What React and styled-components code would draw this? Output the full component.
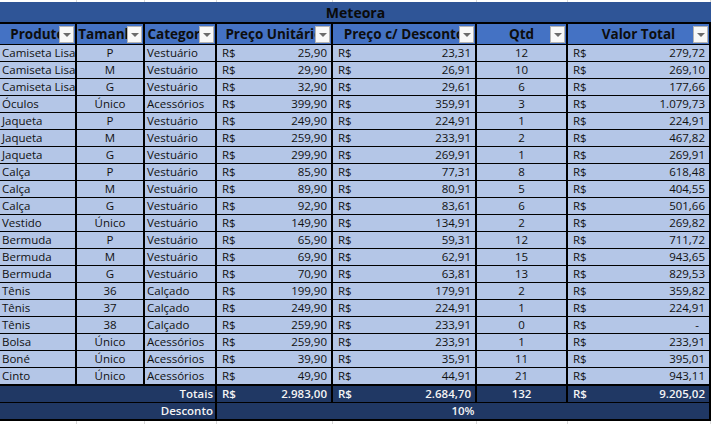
import React from 'react';
import styled, { createGlobalStyle } from 'styled-components';

const COLS = '77px 68px 72px 116px 144px 91px 143px';

const rows = [
  ['Camiseta Lisa', 'P', 'Vestuário', '25,90', '23,31', '12', '279,72'],
  ['Camiseta Lisa', 'M', 'Vestuário', '29,90', '26,91', '10', '269,10'],
  ['Camiseta Lisa', 'G', 'Vestuário', '32,90', '29,61', '6', '177,66'],
  ['Óculos', 'Único', 'Acessórios', '399,90', '359,91', '3', '1.079,73'],
  ['Jaqueta', 'P', 'Vestuário', '249,90', '224,91', '1', '224,91'],
  ['Jaqueta', 'M', 'Vestuário', '259,90', '233,91', '2', '467,82'],
  ['Jaqueta', 'G', 'Vestuário', '299,90', '269,91', '1', '269,91'],
  ['Calça', 'P', 'Vestuário', '85,90', '77,31', '8', '618,48'],
  ['Calça', 'M', 'Vestuário', '89,90', '80,91', '5', '404,55'],
  ['Calça', 'G', 'Vestuário', '92,90', '83,61', '6', '501,66'],
  ['Vestido', 'Único', 'Vestuário', '149,90', '134,91', '2', '269,82'],
  ['Bermuda', 'P', 'Vestuário', '65,90', '59,31', '12', '711,72'],
  ['Bermuda', 'M', 'Vestuário', '69,90', '62,91', '15', '943,65'],
  ['Bermuda', 'G', 'Vestuário', '70,90', '63,81', '13', '829,53'],
  ['Tênis', '36', 'Calçado', '199,90', '179,91', '2', '359,82'],
  ['Tênis', '37', 'Calçado', '249,90', '224,91', '1', '224,91'],
  ['Tênis', '38', 'Calçado', '259,90', '233,91', '0', '-'],
  ['Bolsa', 'Único', 'Acessórios', '259,90', '233,91', '1', '233,91'],
  ['Boné', 'Único', 'Acessórios', '39,90', '35,91', '11', '395,01'],
  ['Cinto', 'Único', 'Acessórios', '49,90', '44,91', '21', '943,11'],
];

const headers = ['Produto', 'Tamanho', 'Categoria', 'Preço Unitário', 'Preço c/ Desconto', 'Qtd', 'Valor Total'];

const GlobalStyle = createGlobalStyle`
  html, body {
    margin: 0;
    padding: 0;
    background: #fff;
  }
  body {
    font-family: 'Open Sans', 'Liberation Sans', sans-serif;
  }
`;

const Sheet = styled.div`
  width: 713px;
  height: 424px;
  overflow: hidden;
  background: #fff;
  display: flex;
  flex-direction: column;
`;

const GridStrip = styled.div`
  display: grid;
  grid-template-columns: ${COLS};
  height: ${(p) => p.$h}px;
  flex: none;

  > span {
    border-right: 1px solid #d9d9d9;
  }
`;

const Table = styled.div`
  width: 711px;
  display: flex;
  flex-direction: column;
  flex: none;
`;

const Title = styled.div`
  height: 20px;
  background: #2f5597;
  border-bottom: 2px solid #000;
  display: flex;
  align-items: center;
  justify-content: center;
  font-size: 14px;
  font-weight: 700;
  color: #0a0a0a;
`;

const Row = styled.div`
  display: grid;
  grid-template-columns: ${COLS};
  border-top: ${(p) => (p.$topLine ? '1px solid #000' : 'none')};
`;

const HeadCell = styled.div`
  position: relative;
  height: 20px;
  background: #4472c4;
  border-right: 2px solid #000;
  border-bottom: 1px solid #000;
  font-size: 13.5px;
  font-weight: 700;
  line-height: 20px;
  color: #0d0d0d;
  text-align: center;
  white-space: nowrap;
  overflow: hidden;
`;

const FilterButton = styled.span`
  position: absolute;
  top: 2px;
  right: 1px;
  width: 13px;
  height: 15px;
  background: #f8f8f8;
  border: 1px solid #b4b4b4;
  display: flex;
  align-items: center;
  justify-content: center;

  &::after {
    content: '';
    border-left: 4px solid transparent;
    border-right: 4px solid transparent;
    border-top: 4px solid #6b6b6b;
    margin-top: 1px;
  }
`;

const Cell = styled.div`
  height: 16px;
  background: #b4c6e7;
  border-right: 2px solid #000;
  border-bottom: 1px solid #000;
  font-size: 11.5px;
  line-height: 16px;
  color: #111;
  white-space: nowrap;
  overflow: hidden;
  padding-left: ${(p) => (p.$align === 'left' ? '2px' : '0')};
  text-align: ${(p) => p.$align || 'left'};
`;

const MoneyCell = styled(Cell)`
  display: flex;
  justify-content: space-between;
  padding: 0 ${(p) => (p.$dash ? '10px' : '4px')} 0 5px;
`;

const TotalCell = styled(Cell)`
  background: #203864;
  color: #f4f4f4;
  font-weight: 600;
  border-bottom-width: ${(p) => (p.$last ? '2px' : '1px')};
  grid-column: span ${(p) => p.$span || 1};
  padding-right: ${(p) => (p.$align === 'right' ? '2px' : '0')};
`;

const TotalMoney = styled(TotalCell)`
  display: flex;
  justify-content: space-between;
  padding: 0 4px 0 5px;
`;

const Money = ({ value, as: Comp = MoneyCell, ...rest }) => (
  <Comp $dash={value === '-'} {...rest}>
    <span>R$</span>
    <span>{value}</span>
  </Comp>
);

const Strip = ({ h }) => (
  <GridStrip $h={h}>
    {headers.map((h2) => (
      <span key={h2} />
    ))}
  </GridStrip>
);

export default function App() {
  return (
    <>
      <GlobalStyle />
      <Sheet>
        <Strip h={2} />
        <Table>
          <Title>Meteora</Title>
          <Row>
            {headers.map((h) => (
              <HeadCell key={h}>
                {h}
                <FilterButton />
              </HeadCell>
            ))}
          </Row>
          {rows.map((r, i) => (
            <Row key={i}>
              <Cell $align="left">{r[0]}</Cell>
              <Cell $align="center">{r[1]}</Cell>
              <Cell $align="left">{r[2]}</Cell>
              <Money value={r[3]} />
              <Money value={r[4]} />
              <Cell $align="center">{r[5]}</Cell>
              <Money value={r[6]} />
            </Row>
          ))}
          <Row $topLine>
            <TotalCell $span={3} $align="right">Totais</TotalCell>
            <Money as={TotalMoney} value="2.983,00" />
            <Money as={TotalMoney} value="2.684,70" />
            <TotalCell $align="center">132</TotalCell>
            <Money as={TotalMoney} value="9.205,02" />
          </Row>
          <Row>
            <TotalCell $span={3} $align="right" $last>Desconto</TotalCell>
            <TotalCell $span={4} $align="center" $last>10%</TotalCell>
          </Row>
        </Table>
        <Strip h={4} />
      </Sheet>
    </>
  );
}
